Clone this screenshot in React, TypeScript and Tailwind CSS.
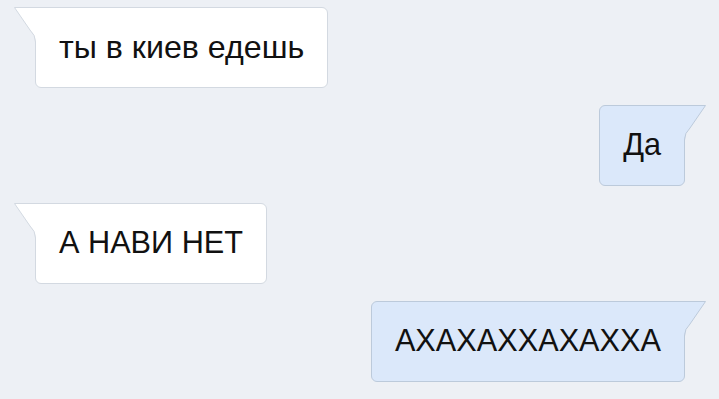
type Side = "left" | "right";

interface BubbleProps {
	side: Side;
	text: string;
	size: string;
}

const Tail = ({ side, fill, stroke }: { side: Side; fill: string; stroke: string }) => (
	<svg
		width="23"
		height="41"
		viewBox="0 0 23 41"
		className={
			side === "left"
				? "absolute left-[-22px] top-[-1px]"
				: "absolute right-[-22px] top-[-1px] -scale-x-100"
		}
	>
		<path d="M0.5 0.5 L23 0.5 L23 41 L21.5 41 L21.5 35 Q21.5 28 16 23 Z" fill={fill} />
		<path
			d="M23 0.5 L0.5 0.5 L16 23 Q21.5 28 21.5 35 L21.5 41"
			fill="none"
			stroke={stroke}
			strokeWidth="1"
		/>
	</svg>
);

const Bubble = ({ side, text, size }: BubbleProps) => {
	const mine = side === "right";
	const fill = mine ? "#dbe8fa" : "#ffffff";
	const stroke = mine ? "#bccadb" : "#d3d9e1";

	return (
		<div className={mine ? "flex justify-end pr-[34px]" : "flex justify-start pl-[35px]"}>
			<div
				className={
					mine
						? "relative flex h-[81px] items-center rounded-md rounded-tr-none border border-[#bccadb] bg-[#dbe8fa] px-[23px] pb-[2px]"
						: "relative flex h-[81px] items-center rounded-md rounded-tl-none border border-[#d3d9e1] bg-white px-[23px] pb-[2px]"
				}
			>
				<Tail side={side} fill={fill} stroke={stroke} />
				<span className={`${size} leading-[34px] text-[#111] font-['Liberation_Sans',Arial,sans-serif]`}>
					{text}
				</span>
			</div>
		</div>
	);
};

const messages: BubbleProps[] = [
	{ side: "left", text: "ты в киев едешь", size: "text-[32.2px]" },
	{ side: "right", text: "Да", size: "text-[30.7px]" },
	{ side: "left", text: "А НАВИ НЕТ", size: "text-[30.7px]" },
	{ side: "right", text: "АХАХАХХАХАХХА", size: "text-[30.7px]" },
];

export default function App() {
	return (
		<div className="flex h-[399px] w-[719px] flex-col gap-[17px] overflow-hidden bg-[#edf0f5] pt-[7px]">
			{messages.map((m, i) => (
				<Bubble key={i} side={m.side} text={m.text} size={m.size} />
			))}
		</div>
	);
}
